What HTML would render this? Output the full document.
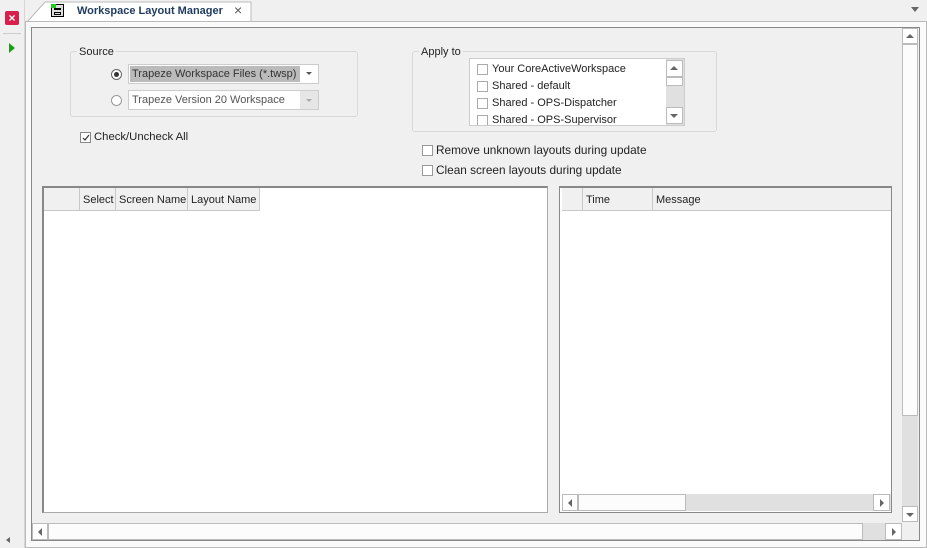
<!DOCTYPE html>
<html><head><style>
*{margin:0;padding:0;box-sizing:border-box}
body{width:927px;height:548px;background:#f0f0f0;font-family:"Liberation Sans",sans-serif;font-size:11px;color:#222;position:relative;overflow:hidden}
.a{position:absolute}
.cb{position:absolute;width:11px;height:11px;border:1px solid #777;background:#fff}
.hd{position:absolute;top:0;height:23px;background:#f0f0f0;border-right:1px solid #c8c8c8;border-bottom:1px solid #c8c8c8;line-height:24px;padding-left:3px;font-size:11px}
</style></head><body>
<div class="a" style="left:0;top:0;width:25px;height:548px;background:#f0f0f0;border-right:1px solid #d6d6d6"></div>
<div class="a" style="left:5px;top:11px;width:14px;height:14px;background:#d81e4a;border-radius:2px;color:#fff;font-size:12px;line-height:14px;text-align:center;font-weight:bold">×</div>
<div class="a" style="left:3px;top:33px;width:18px;height:1px;background:#ccc"></div>
<div class="a" style="left:9px;top:43px;width:0;height:0;border-top:5px solid transparent;border-bottom:5px solid transparent;border-left:6px solid #1c9e1c"></div>
<div class="a" style="left:6px;top:537px;width:0;height:0;border-top:3px solid transparent;border-bottom:3px solid transparent;border-right:4px solid #666"></div>
<svg class="a" style="left:25px;top:0" width="230" height="23"><path d="M2 22 L20 2 L226 2 L226 22" fill="#fff" stroke="#bbb"/></svg>
<div class="a" style="left:51px;top:4px;width:13px;height:13px;border:1px solid #000;background:#ddd"><div class="a" style="left:2px;top:3px;width:7px;height:2px;border:1px solid #000"></div><div class="a" style="left:2px;top:7px;width:7px;height:3px;border:1px solid #000"></div><div class="a" style="left:-1px;top:-1px;width:5px;height:4px;background:#2c2"></div></div>
<div class="a" style="left:77px;top:5px;font-size:11px;color:#1e3a5f;font-weight:bold">Workspace Layout Manager</div>
<div class="a" style="left:234px;top:2px;font-size:14px;color:#555">×</div>
<div class="a" style="left:911px;top:7px;border-left:4px solid transparent;border-right:4px solid transparent;border-top:5px solid #666"></div>
<div class="a" style="left:25px;top:21px;width:902px;height:527px;border:1px solid #bbb;background:#fafafa"></div>
<div class="a" style="left:31px;top:27px;width:889px;height:514px;border:1px solid #888;background:#f0f0f0"></div>
<div class="a" style="left:902px;top:28px;width:16px;height:494px;background:#e0e0e0"></div>
<div class="a" style="left:902px;top:28px;width:16px;height:16px;background:#fff;border:1px solid #bbb"><div class="a" style="left:3px;top:5px;border-left:4px solid transparent;border-right:4px solid transparent;border-bottom:4px solid #666"></div></div>
<div class="a" style="left:902px;top:44px;width:16px;height:372px;background:#fcfcfc;border:1px solid #bbb"></div>
<div class="a" style="left:902px;top:506px;width:16px;height:16px;background:#fff;border:1px solid #bbb"><div class="a" style="left:3px;top:6px;border-left:4px solid transparent;border-right:4px solid transparent;border-top:4px solid #666"></div></div>
<div class="a" style="left:32px;top:523px;width:870px;height:17px;background:#e0e0e0"></div>
<div class="a" style="left:32px;top:523px;width:16px;height:17px;background:#fff;border:1px solid #bbb"><div class="a" style="left:5px;top:4px;border-top:4px solid transparent;border-bottom:4px solid transparent;border-right:4px solid #666"></div></div>
<div class="a" style="left:48px;top:523px;width:815px;height:17px;background:#fcfcfc;border:1px solid #bbb"></div>
<div class="a" style="left:885px;top:523px;width:17px;height:17px;background:#fff;border:1px solid #bbb"><div class="a" style="left:6px;top:4px;border-top:4px solid transparent;border-bottom:4px solid transparent;border-left:4px solid #666"></div></div>
<div class="a" style="left:70px;top:51px;width:288px;height:66px;border:1px solid #d8d8d8;border-radius:3px"></div>
<div class="a" style="left:77px;top:46px;background:#f0f0f0;padding:0 2px">Source</div>
<div class="a" style="left:111px;top:69px;width:11px;height:11px;border:1px solid #666;border-radius:50%;background:#fff"><div class="a" style="left:2px;top:2px;width:5px;height:5px;border-radius:50%;background:#333"></div></div>
<div class="a" style="left:128px;top:64px;width:191px;height:20px;border:1px solid #ccc;background:#fff"></div>
<div class="a" style="left:130px;top:66px;width:170px;height:16px;background:#bbb;line-height:17px;padding-left:2px;color:#333">Trapeze Workspace Files (*.twsp)</div>
<div class="a" style="left:306px;top:72px;border-left:3px solid transparent;border-right:3px solid transparent;border-top:3px solid #555"></div>
<div class="a" style="left:111px;top:95px;width:11px;height:11px;border:1px solid #999;border-radius:50%;background:#fff"></div>
<div class="a" style="left:128px;top:90px;width:191px;height:20px;border:1px solid #ccc;background:#fff;line-height:19px;padding-left:3px;color:#555">Trapeze Version 20 Workspace</div>
<div class="a" style="left:300px;top:91px;width:18px;height:18px;background:#e6e6e6"></div>
<div class="a" style="left:306px;top:99px;border-left:3px solid transparent;border-right:3px solid transparent;border-top:3px solid #aaa"></div>
<div class="cb" style="left:80px;top:132px;border-color:#888"><svg class="a" style="left:1px;top:1px" width="8" height="8"><path d="M1 4 L3 6 L7 1" fill="none" stroke="#333" stroke-width="1.2"/></svg></div>
<div class="a" style="left:94px;top:131px;font-size:11.3px">Check/Uncheck All</div>
<div class="a" style="left:412px;top:51px;width:305px;height:81px;border:1px solid #d8d8d8;border-radius:3px"></div>
<div class="a" style="left:419px;top:46px;background:#f0f0f0;padding:0 2px">Apply to</div>
<div class="a" style="left:469px;top:58px;width:216px;height:68px;border:1px solid #ccc;background:#fff;overflow:hidden">
<div class="cb" style="left:7px;top:5px;border-color:#aaa"></div><div class="a" style="left:22px;top:4px">Your CoreActiveWorkspace</div>
<div class="cb" style="left:7px;top:22px;border-color:#aaa"></div><div class="a" style="left:22px;top:21px">Shared - default</div>
<div class="cb" style="left:7px;top:39px;border-color:#aaa"></div><div class="a" style="left:22px;top:38px">Shared - OPS-Dispatcher</div>
<div class="cb" style="left:7px;top:56px;border-color:#aaa"></div><div class="a" style="left:22px;top:55px">Shared - OPS-Supervisor</div>
<div class="a" style="left:196px;top:0;width:18px;height:66px;background:#e0e0e0"></div>
<div class="a" style="left:196px;top:1px;width:17px;height:17px;background:#fff;border:1px solid #bbb"><div class="a" style="left:3px;top:5px;border-left:4px solid transparent;border-right:4px solid transparent;border-bottom:4px solid #666"></div></div>
<div class="a" style="left:196px;top:18px;width:17px;height:9px;background:#fff;border:1px solid #bbb"></div>
<div class="a" style="left:196px;top:48px;width:17px;height:17px;background:#fff;border:1px solid #bbb"><div class="a" style="left:3px;top:6px;border-left:4px solid transparent;border-right:4px solid transparent;border-top:4px solid #666"></div></div>
</div>
<div class="cb" style="left:422px;top:145px;border-color:#999"></div><div class="a" style="left:436px;top:143px;font-size:11.8px">Remove unknown layouts during update</div>
<div class="cb" style="left:422px;top:165px;border-color:#999"></div><div class="a" style="left:436px;top:163px;font-size:11.8px">Clean screen layouts during update</div>
<div class="a" style="left:42px;top:186px;width:506px;height:327px;border:1px solid #aaa;border-top:2px solid #888;border-left:2px solid #888;background:#fff">
<div class="hd" style="left:0;width:36px"></div>
<div class="hd" style="left:36px;width:36px">Select</div>
<div class="hd" style="left:72px;width:72px">Screen Name</div>
<div class="hd" style="left:144px;width:72px">Layout Name</div>
</div>
<div class="a" style="left:559px;top:186px;width:333px;height:327px;border:1px solid #888;border-top:2px solid #888;background:#fff">
<div class="hd" style="left:2px;width:21px"></div>
<div class="hd" style="left:23px;width:70px">Time</div>
<div class="hd" style="left:93px;width:238px;border-right:none">Message</div>
<div class="a" style="left:2px;top:306px;width:329px;height:17px;background:#e0e0e0"></div>
<div class="a" style="left:2px;top:306px;width:16px;height:17px;background:#fff;border:1px solid #bbb"><div class="a" style="left:5px;top:4px;border-top:4px solid transparent;border-bottom:4px solid transparent;border-right:4px solid #666"></div></div>
<div class="a" style="left:18px;top:306px;width:108px;height:17px;background:#fcfcfc;border:1px solid #bbb"></div>
<div class="a" style="left:313px;top:306px;width:17px;height:17px;background:#fff;border:1px solid #bbb"><div class="a" style="left:6px;top:4px;border-top:4px solid transparent;border-bottom:4px solid transparent;border-left:4px solid #666"></div></div>
</div>
</body></html>
